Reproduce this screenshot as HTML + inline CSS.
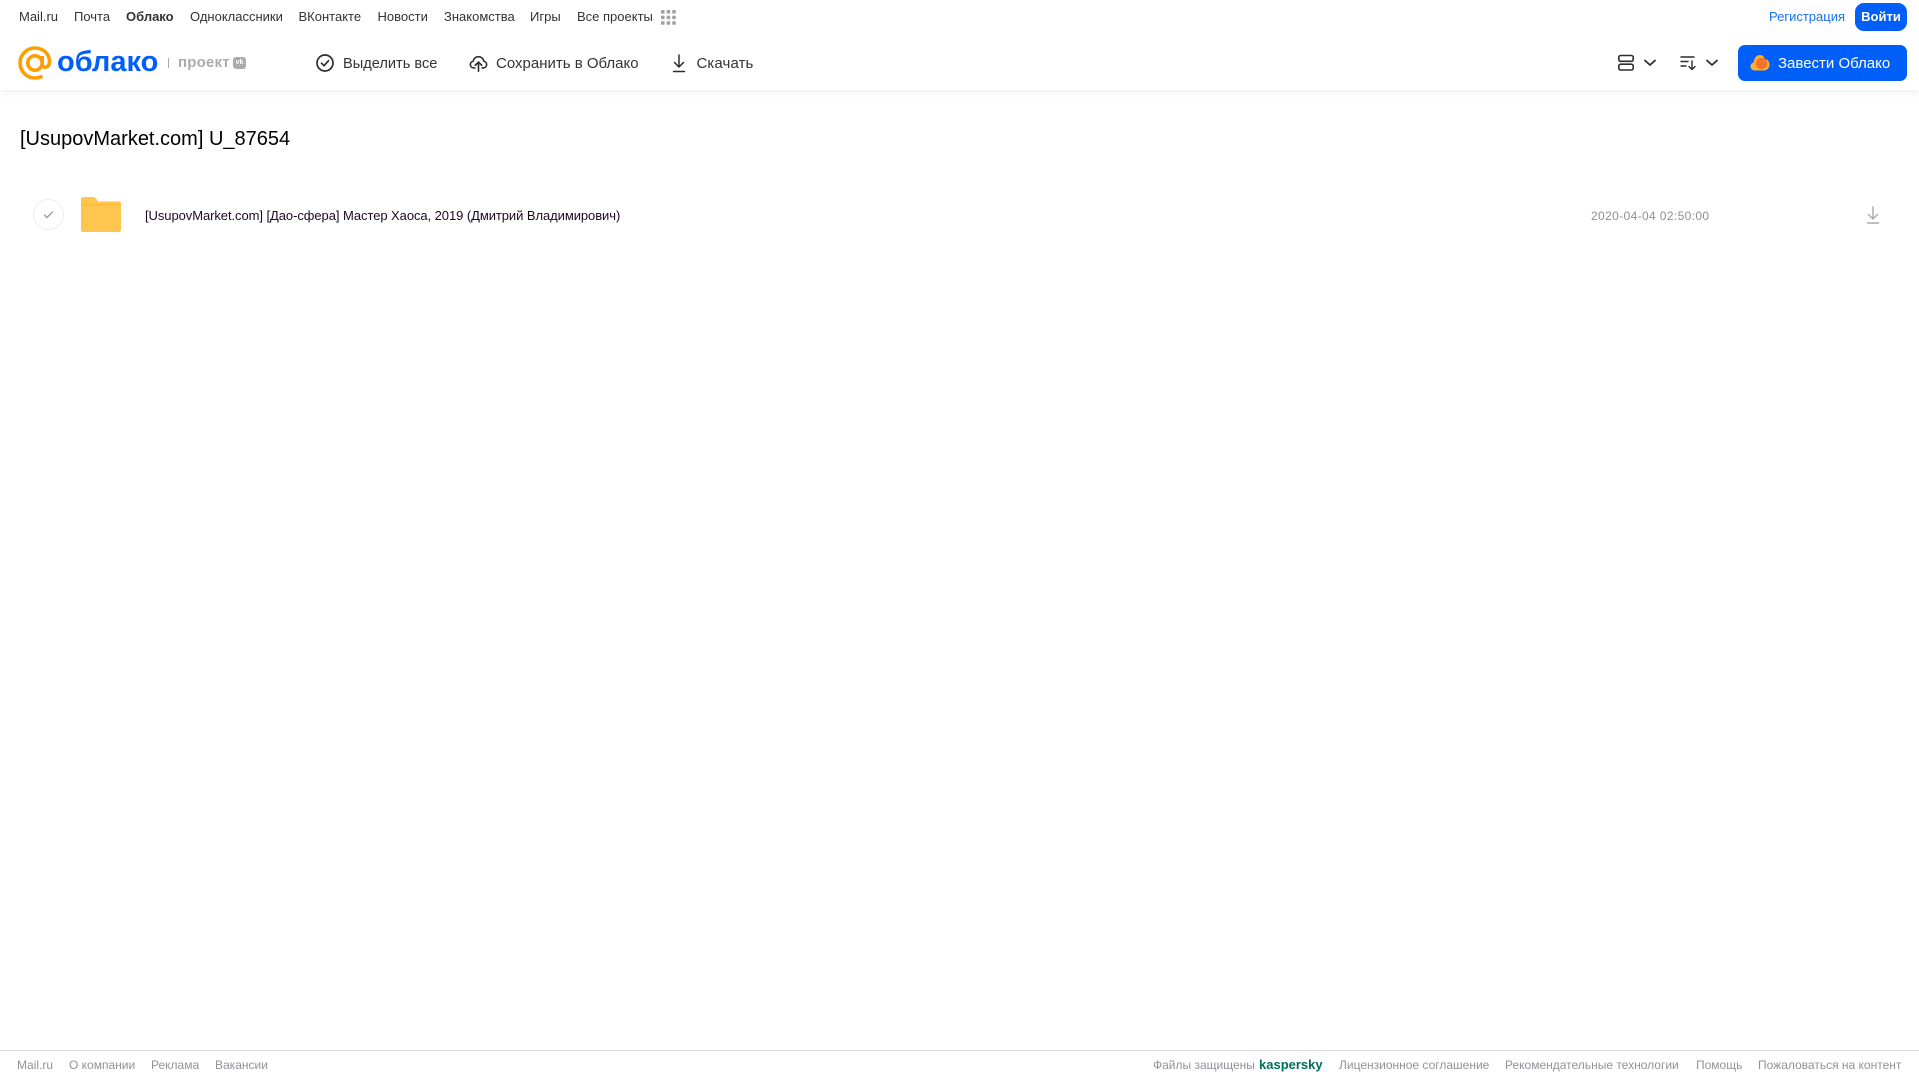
<!DOCTYPE html>
<html lang="ru">
<head>
<meta charset="utf-8">
<title>Облако</title>
<style>
html,body{margin:0;padding:0;background:#fff;}
body{width:1919px;height:1079px;position:relative;overflow:hidden;font-family:"Liberation Sans",Arial,sans-serif;}
.t{position:absolute;white-space:nowrap;line-height:20px;}
.n{top:7px;font-size:13px;color:#333;}
.a{top:53.500px;font-size:15px;color:#333;}
.f{top:1055px;font-size:12px;color:#919399;}
svg{position:absolute;display:block;}
</style>
</head>
<body>
<div style="position:absolute;left:0;top:0;width:1919px;height:90px;background:#fff;box-shadow:0 2px 8px rgba(0,0,0,.07);"></div>

<span class="t n" style="left:19px">Mail.ru</span>
<span class="t n" style="left:74px">Почта</span>
<span class="t n" style="left:126px;font-weight:bold">Облако</span>
<span class="t n" style="left:190px">Одноклассники</span>
<span class="t n" style="left:298.500px">ВКонтакте</span>
<span class="t n" style="left:377.500px">Новости</span>
<span class="t n" style="left:444px">Знакомства</span>
<span class="t n" style="left:530px">Игры</span>
<span class="t n" style="left:577px">Все проекты</span>
<svg style="left:661px;top:10px" width="15" height="15" viewBox="0 0 15 15" fill="#a0a1a5">
<rect x="0" y="0" width="3.600" height="3.600" rx=".8"/><rect x="5.600" y="0" width="3.600" height="3.600" rx=".8"/><rect x="11.200" y="0" width="3.600" height="3.600" rx=".8"/>
<rect x="0" y="5.600" width="3.600" height="3.600" rx=".8"/><rect x="5.600" y="5.600" width="3.600" height="3.600" rx=".8"/><rect x="11.200" y="5.600" width="3.600" height="3.600" rx=".8"/>
<rect x="0" y="11.200" width="3.600" height="3.600" rx=".8"/><rect x="5.600" y="11.200" width="3.600" height="3.600" rx=".8"/><rect x="11.200" y="11.200" width="3.600" height="3.600" rx=".8"/>
</svg>

<span class="t" style="left:1769px;top:7px;font-size:13px;color:#1a6ff0">Регистрация</span>
<div style="position:absolute;left:1855px;top:3px;width:52px;height:28px;border-radius:9px;background:#005ff9;color:#fff;font-size:13px;font-weight:bold;line-height:27px;text-align:center;">Войти</div>

<!-- logo -->
<svg style="left:18px;top:46px" width="34" height="34" viewBox="0 0 34 34" fill="none" stroke="#ff9e00" stroke-width="3.600">
<circle cx="17" cy="17" r="7.200"/>
<path d="M24.200 10v8.600c0 3.600 5.900 3.600 7-0.600C33 9.500 26 2 17 2 8.700 2 2 8.700 2 17s6.700 15 15 15c3 0 5.400-.7 7.400-2"/>
</svg>
<span class="t" style="left:57px;top:45px;font-size:29px;line-height:34px;font-weight:bold;color:#005ff9;">облако</span>
<div style="position:absolute;left:168px;top:58px;width:1px;height:10px;background:#a8a8ab;"></div>
<span class="t" style="left:178px;top:53px;font-size:15px;color:#a9abaf;font-weight:bold;letter-spacing:.2px;">проект</span>
<div style="position:absolute;left:233px;top:57px;width:13px;height:12px;border-radius:3px;background:#a9abaf;color:#fff;font-size:7px;font-weight:bold;line-height:12px;text-align:center;">vk</div>

<!-- actions -->
<svg style="left:315px;top:53px" width="20" height="20" viewBox="0 0 20 20" fill="none" stroke="#2c2d2e" stroke-width="1.700">
<circle cx="10" cy="10" r="8"/><path d="M6.500 10.200l2.500 2.500 4.500-5" stroke-linecap="round" stroke-linejoin="round"/>
</svg>
<span class="t a" style="left:343px;font-size:14.600px">Выделить все</span>

<svg style="left:469px;top:53px" width="19" height="20" viewBox="0 0 21 20" fill="none" stroke="#2c2d2e" stroke-width="1.800" stroke-linecap="round" stroke-linejoin="round">
<path d="M6.500 15.500H5.500C3 15.500 1.500 13.800 1.500 11.800c0-1.900 1.300-3.300 3-3.600C5 5.200 7.500 3 10.500 3s5.500 2.200 6 5.200c1.700.3 3 1.700 3 3.600 0 2-1.500 3.700-4 3.700h-1"/>
<path d="M10.500 19V9.500M7 12.500l3.500-3.500 3.500 3.500"/>
</svg>
<span class="t a" style="left:496px">Сохранить в Облако</span>

<svg style="left:670px;top:53px" width="18" height="20" viewBox="0 0 18 20" fill="none" stroke="#2c2d2e" stroke-width="1.500" stroke-linecap="round" stroke-linejoin="round">
<path d="M9 2v12M4.500 9.500L9 14l4.500-4.500M3.500 18.500h11"/>
</svg>
<span class="t a" style="left:696.500px;letter-spacing:.1px">Скачать</span>

<!-- right controls -->
<svg style="left:1617px;top:54px" width="18" height="18" viewBox="0 0 18 18" fill="none" stroke="#2c2d2e" stroke-width="1.600">
<rect x="1.800" y="1.500" width="14.400" height="5.800" rx="1.800"/><rect x="1.800" y="10.200" width="14.400" height="5.800" rx="1.800"/>
</svg>
<svg style="left:1643px;top:58px" width="14" height="10" viewBox="0 0 14 10" fill="none" stroke="#2c2d2e" stroke-width="1.800" stroke-linecap="round" stroke-linejoin="round"><path d="M2 2.500l5 4.500 5-4.500"/></svg>
<svg style="left:1680px;top:55px" width="18" height="16" viewBox="0 0 18 16" fill="none" stroke="#2c2d2e" stroke-width="1.400" stroke-linecap="round" stroke-linejoin="round">
<path d="M1 2h13M1 6.500h7M1 11h5M12 6v8M9 11.500l3 3 3-3"/>
</svg>
<svg style="left:1705px;top:58px" width="14" height="10" viewBox="0 0 14 10" fill="none" stroke="#2c2d2e" stroke-width="1.800" stroke-linecap="round" stroke-linejoin="round"><path d="M2 2.500l5 4.500 5-4.500"/></svg>

<div style="position:absolute;left:1738px;top:45px;width:169px;height:36px;border-radius:7px;background:#005ff9;"></div>
<svg style="left:1750px;top:54px" width="20" height="17" viewBox="0 0 20 17">
<path d="M5 16.500C2 16.500.5 14.500.5 12.300.5 10.300 1.800 8.800 3.700 8.400 3.800 4.500 6.500 1 9.800 1c2.700 0 4.400 1.800 5 4 2.800.2 4.700 2.600 4.700 5.600 0 3.200-2.300 5.900-5.500 5.900z" fill="#ffb02e"/>
<circle cx="11.500" cy="9.500" r="5.800" fill="#f4742b"/>
</svg>
<span class="t" style="left:1778px;top:53.500px;font-size:15px;color:#fff;">Завести Облако</span>

<!-- title -->
<div class="t" style="left:20px;top:125px;font-size:20px;line-height:28px;color:#000;">[UsupovMarket.com] U_87654</div>

<!-- row -->
<div style="position:absolute;left:33px;top:199px;width:31px;height:31px;box-sizing:border-box;border:1px solid #ececee;border-radius:50%;"></div>
<svg style="left:42px;top:209px" width="13" height="11" viewBox="0 0 13 11" fill="none" stroke="#9a9a9e" stroke-width="1.400" stroke-linecap="round" stroke-linejoin="round"><path d="M2.500 6l2.500 2.500 5.500-5.500"/></svg>
<svg style="left:81px;top:197px" width="40" height="35" viewBox="0 0 40 35">
<path d="M2 0h10c2 0 3 1 4 2.500L17 4.500h21c1.100 0 2 .9 2 2V33c0 1.100-.9 2-2 2H2c-1.100 0-2-.9-2-2V2C0 .9.900 0 2 0z" fill="#ffc64f"/>
<rect x="0" y="7" width="40" height="1" fill="#ffb83a"/>
</svg>
<span class="t" style="left:145px;top:205.500px;font-size:13px;letter-spacing:-.07px;color:#1b0a23;">[UsupovMarket.com] [Дао-сфера] Мастер Хаоса, 2019 (Дмитрий Владимирович)</span>
<span class="t" style="left:1591px;top:205.500px;font-size:12px;color:#8e8e93;letter-spacing:.37px;">2020-04-04 02:50:00</span>
<svg style="left:1864px;top:205px" width="18" height="20" viewBox="0 0 18 20" fill="none" stroke="#a8a8ab" stroke-width="1.400" stroke-linecap="round" stroke-linejoin="round">
<path d="M9 2v12M4.500 9.500L9 14l4.500-4.500M3.500 18h11"/>
</svg>

<!-- footer -->
<div style="position:absolute;left:0;top:1050px;width:1919px;height:1px;background:#d9d9db;"></div>
<span class="t f" style="left:17px">Mail.ru</span>
<span class="t f" style="left:69px">О компании</span>
<span class="t f" style="left:151px">Реклама</span>
<span class="t f" style="left:215px">Вакансии</span>
<span class="t f" style="left:1153px">Файлы защищены</span>
<span class="t" style="left:1259px;top:1055px;font-size:13px;font-weight:bold;color:#006d5c;">kaspersky</span>
<span class="t f" style="left:1339px">Лицензионное соглашение</span>
<span class="t f" style="left:1505px">Рекомендательные технологии</span>
<span class="t f" style="left:1696px">Помощь</span>
<span class="t f" style="left:1758px">Пожаловаться на контент</span>
</body>
</html>
